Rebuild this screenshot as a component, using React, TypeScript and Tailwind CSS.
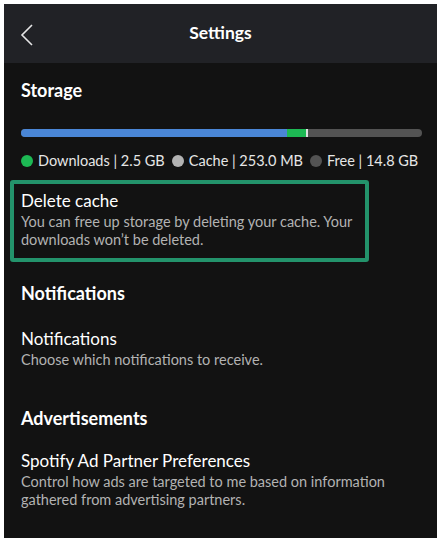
import React from "react";

const font = { fontFamily: "Lato, 'Noto Sans', sans-serif" };

function Legend({ color, label }: { color: string; label: string }) {
  return (
    <div className="flex items-center gap-[5px]">
      <span className={`h-[12px] w-[12px] rounded-full ${color}`} />
      <span>{label}</span>
    </div>
  );
}

function Item({ title, desc }: { title: string; desc: React.ReactNode }) {
  return (
    <div>
      <div className="text-[17px] leading-[20px] text-white">{title}</div>
      <div className="mt-[2px] text-[14.5px] leading-[18px] text-[#b3b3b3]">{desc}</div>
    </div>
  );
}

export default function App() {
  return (
    <div className="h-[544px] w-[441px] bg-white pl-[4px] pt-[4px]" style={font}>
      <div className="flex h-[534px] w-[433px] flex-col bg-[#121212]">
        <div className="relative flex h-[59px] items-center justify-center bg-[#212226]">
          <svg className="absolute left-[15px] top-[19px]" width="16" height="24" viewBox="0 0 16 24" fill="none">
            <path d="M13 2 L3 12 L13 22" stroke="#e6e6e6" strokeWidth="1.6" />
          </svg>
          <span className="text-[17.5px] font-bold text-white">Settings</span>
        </div>

        <div className="px-[17px] pt-[16px]">
          <div className="text-[18px] font-bold leading-[22px] text-white">Storage</div>
          <div className="mt-[28px] flex h-[8px] w-[401px] overflow-hidden rounded-full bg-[#535353]">
            <div className="w-[266px] bg-[#4a86d6]" />
            <div className="w-[19px] bg-[#1db954]" />
            <div className="w-[2px] bg-[#e0e0e0]" />
          </div>
          <div className="mt-[15px] flex items-center gap-[7px] text-[14.5px] leading-[18px] text-[#e6e6e6]">
            <Legend color="bg-[#1db954]" label="Downloads | 2.5 GB" />
            <Legend color="bg-[#b3b3b3]" label="Cache | 253.0 MB" />
            <Legend color="bg-[#535353]" label="Free | 14.8 GB" />
          </div>
        </div>

        <div className="ml-[6px] mt-[10px] w-[359px] rounded-[3px] border-[4px] border-[#23936b] px-[7px] pb-[9px] pt-[7px]">
          <Item
            title="Delete cache"
            desc={<>You can free up storage by deleting your cache. Your<br />downloads won’t be deleted.</>}
          />
        </div>

        <div className="px-[17px]">
          <div className="mt-[20px] text-[18px] font-bold leading-[22px] text-white">Notifications</div>
          <div className="mt-[25px]">
            <Item title="Notifications" desc="Choose which notifications to receive." />
          </div>
          <div className="mt-[38px] text-[18px] font-bold leading-[22px] text-white">Advertisements</div>
          <div className="mt-[22px]">
            <Item
              title="Spotify Ad Partner Preferences"
              desc={<>Control how ads are targeted to me based on information<br />gathered from advertising partners.</>}
            />
          </div>
        </div>
      </div>
    </div>
  );
}
